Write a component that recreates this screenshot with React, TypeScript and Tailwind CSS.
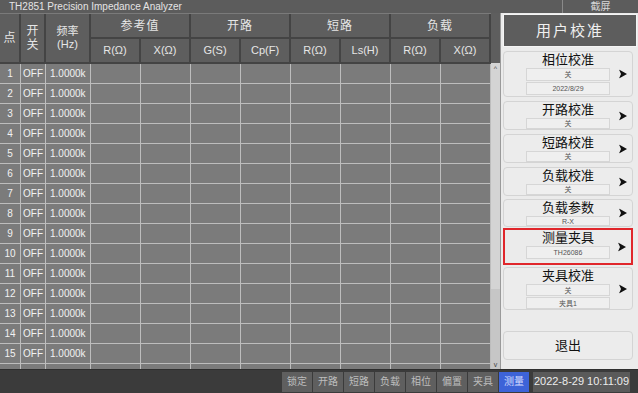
import React from 'react'

const font = { fontFamily: '"Liberation Sans", "Noto Sans CJK SC", sans-serif' }

const cols = 'grid grid-cols-[21px_25px_45px_50px_50px_50px_50px_50px_50px_50px_50px]'

function Arrow() {
  return (
    <svg width="8" height="9" viewBox="0 0 8 9" className="absolute right-[5px] top-1/2 -translate-y-1/2">
      <path d="M0 0 L8 4.5 L0 9 L2 4.5 Z" fill="#111" />
    </svg>
  )
}

function ValueBox({ text }: { text: string }) {
  return (
    <div className="w-[84px] h-[13px] border border-[#d6d6d6] bg-[#efefef] flex items-center justify-center text-[7px] leading-none text-[#555]">
      {text}
    </div>
  )
}

function CalButton({ title, values, h, mt, red }: { title: string; values: string[]; h: string; mt: string; red?: boolean }) {
  return (
    <div
      className={`relative ${h} ${mt} w-[130px] flex flex-col items-center pt-[1px] gap-[1px] ${
        red ? 'border-2 border-[#e0262b]' : 'rounded-[4px] border border-[#d4d4d4] bg-[#ececec]'
      }`}
    >
      <div className="text-[13px] leading-[14px] text-[#111]">{title}</div>
      {values.map((v, i) => (
        <ValueBox key={i} text={v} />
      ))}
      <Arrow />
    </div>
  )
}

const header2 = ['R(Ω)', 'X(Ω)', 'G(S)', 'Cp(F)', 'R(Ω)', 'Ls(H)', 'R(Ω)', 'X(Ω)']
const groups = ['参考值', '开路', '短路', '负载']
const bottomBtns = ['锁定', '开路', '短路', '负载', '相位', '偏置', '夹具']

export default function App() {
  const rows = Array.from({ length: 16 }, (_, i) => i + 1)
  return (
    <div className="w-[638px] h-[393px] bg-[#3b3b3b] flex flex-col overflow-hidden" style={font}>
      {/* title bar */}
      <div className="h-[13px] bg-[#5c5c5c] flex items-center text-[10px] leading-none text-[#e4e4e4]">
        <div className="flex-1 pl-[9px]">TH2851 Precision Impedance Analyzer</div>
        <div className="w-[76px] h-full border-l border-[#8a8a8a] flex items-center justify-center text-[#d8d8d8]">截屏</div>
      </div>

      <div className="flex h-[356px]">
        {/* table */}
        <div className="w-[491px] flex flex-col overflow-hidden">
          <div className={`${cols} grid-rows-[25px_25px] bg-[#5e5e5e] text-[#e6e6e6] text-[11px] leading-none border-t border-[#7a7a7a]`}>
            <div className="row-span-2 flex items-center justify-center text-[12px] border-r-2 border-b-2 border-[#444]">点</div>
            <div className="row-span-2 flex flex-col items-center justify-center text-[12px] border-r-2 border-b-2 border-[#444] leading-[14px]">
              <span>开</span>
              <span>关</span>
            </div>
            <div className="row-span-2 flex flex-col items-center justify-center border-r-2 border-b-2 border-[#444] leading-[13px]">
              <span>频率</span>
              <span>(Hz)</span>
            </div>
            {groups.map((g) => (
              <div key={g} className="col-span-2 flex items-center justify-center text-[12px] tracking-[1px] border-r-2 border-b-2 border-[#444]">
                {g}
              </div>
            ))}
            {header2.map((h, i) => (
              <div key={i} className="flex items-center justify-center border-r-2 border-b-2 border-[#444]">
                {h}
              </div>
            ))}
          </div>
          <div className="flex-1 bg-[#7b7b7b] overflow-hidden">
            {rows.map((r) => (
              <div key={r} className={`${cols} h-[20px] text-[10px] leading-none text-[#f2f2f2]`}>
                <div className="flex items-center justify-center border-r border-b border-[#bdbdbd]">{r}</div>
                <div className="flex items-center justify-center border-r border-b border-[#bdbdbd]">OFF</div>
                <div className="flex items-center pl-[4px] border-r border-b border-[#bdbdbd]">1.0000k</div>
                {header2.map((_, i) => (
                  <div key={i} className="border-r border-b border-[#bdbdbd]" />
                ))}
              </div>
            ))}
          </div>
        </div>

        {/* scrollbar */}
        <div className="w-[9px] flex flex-col pt-[50px] bg-[#5e5e5e]">
          <div className="flex-1 bg-[#c6c6c6] flex flex-col">
            <div className="h-[11px] flex items-center justify-center bg-[#d4d4d4] text-[7px] leading-none text-[#444]">^</div>
            <div className="h-[215px] bg-[#d4d4d4]" />
            <div className="flex-1" />
            <div className="h-[9px] flex items-center justify-center text-[7px] leading-none text-[#444]">v</div>
          </div>
        </div>

        {/* right panel */}
        <div className="w-[138px] bg-[#ebebeb] border-l border-[#9a9a9a] pl-[2px] flex flex-col">
          <div className="mt-[1px] w-[134px] h-[33px] bg-[#5d5d5d] border border-[#f4f4f4] flex items-center justify-center text-[15px] leading-none tracking-[2px] text-[#f0f0f0]">
            用户校准
          </div>
          <CalButton title="相位校准" values={['关', '2022/8/29']} h="h-[46px]" mt="mt-[4px]" />
          <CalButton title="开路校准" values={['关']} h="h-[29px]" mt="mt-[4px]" />
          <CalButton title="短路校准" values={['关']} h="h-[29px]" mt="mt-[4px]" />
          <CalButton title="负载校准" values={['关']} h="h-[29px]" mt="mt-[4px]" />
          <CalButton title="负载参数" values={['R-X']} h="h-[28px]" mt="mt-[3px]" />
          <CalButton title="测量夹具" values={['TH26086']} h="h-[37px]" mt="mt-[1px]" red />
          <CalButton title="夹具校准" values={['关', '夹具1']} h="h-[43px]" mt="mt-[2px]" />
          <div className="mt-[21px] w-[130px] h-[29px] rounded-[4px] border border-[#d4d4d4] bg-[#ececec] flex items-center justify-center text-[13px] leading-none text-[#111]">
            退出
          </div>
        </div>
      </div>

      {/* bottom bar */}
      <div className="h-[24px] bg-[#3b3b3b] border-t border-[#2e2e2e] flex items-center pl-[282px] gap-[1px]">
        {bottomBtns.map((b) => (
          <div key={b} className="w-[30px] h-[20px] bg-[#5f5f5f] flex items-center justify-center text-[10px] leading-none text-[#bdbdbd]">
            {b}
          </div>
        ))}
        <div className="w-[30px] h-[20px] bg-[#3d63d8] flex items-center justify-center text-[10px] leading-none text-[#d4dcff]">测量</div>
        <div className="ml-[3px] w-[97px] h-[20px] bg-[#5a5a5a] flex items-center justify-center text-[11px] leading-none text-[#ececec]">
          2022-8-29 10:11:09
        </div>
      </div>
    </div>
  )
}
